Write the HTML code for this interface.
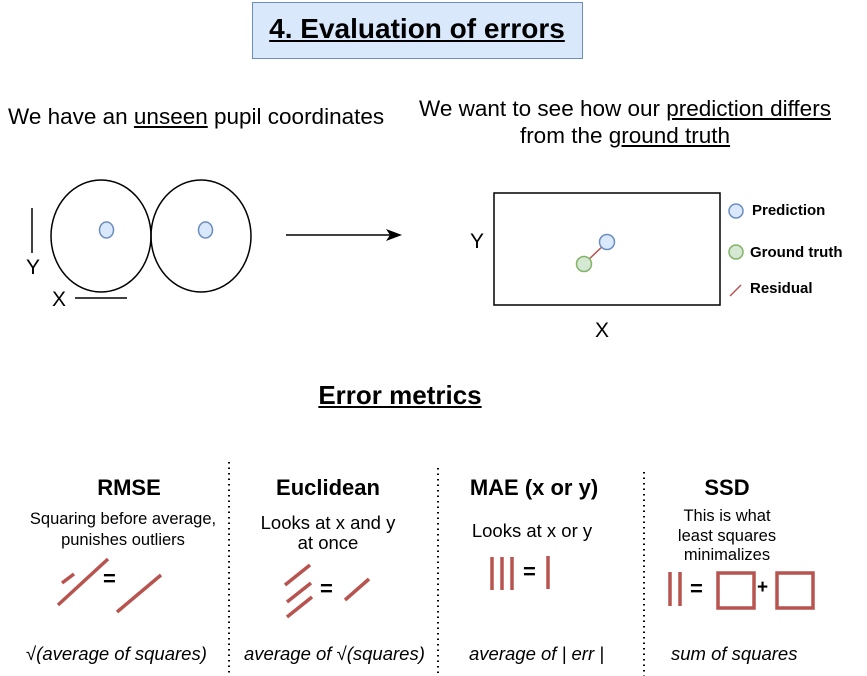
<!DOCTYPE html>
<html><head><style>
body{margin:0;width:867px;height:676px;background:#fff;position:relative;overflow:hidden;font-family:"Liberation Sans",Arial,sans-serif;color:#000}
.a{position:absolute;white-space:nowrap}
.c{transform:translateX(-50%);text-align:center}
u{text-decoration:underline}
</style></head><body>
<div class="a" style="left:252px;top:2px;width:329px;height:55px;background:#dae8fc;border:1px solid #6c8ebf"></div>
<div class="a c" style="left:417px;top:13px;font-size:28px;font-weight:bold"><u>4. Evaluation of errors</u></div>
<div class="a" style="left:8px;top:104px;font-size:22.5px">We have an <u>unseen</u> pupil coordinates</div>
<div class="a c" style="left:625px;top:95px;font-size:22.5px;line-height:27px">We want to see how our <u>prediction differs</u><br>from the <u>ground truth</u></div>
<div class="a" style="left:26px;top:256px;font-size:21px">Y</div>
<div class="a" style="left:52px;top:288px;font-size:21px">X</div>
<div class="a" style="left:470px;top:230px;font-size:21px">Y</div>
<div class="a" style="left:595px;top:319px;font-size:21px">X</div>
<div class="a c" style="left:400px;top:380px;font-size:26px;font-weight:bold"><u>Error metrics</u></div>
<div class="a" style="left:752px;top:202px;font-size:15px;font-weight:bold">Prediction</div>
<div class="a" style="left:750px;top:244px;font-size:15px;font-weight:bold">Ground truth</div>
<div class="a" style="left:750px;top:280px;font-size:15px;font-weight:bold">Residual</div>
<svg class="a" style="left:0;top:0" width="867" height="676">
<line x1="32" y1="208" x2="32" y2="253" stroke="#000" stroke-width="1.5"/>
<line x1="75" y1="298" x2="127" y2="298" stroke="#000" stroke-width="1.5"/>
<ellipse cx="101" cy="236" rx="50" ry="56" fill="none" stroke="#000" stroke-width="1.5"/>
<ellipse cx="201" cy="236" rx="50" ry="56" fill="none" stroke="#000" stroke-width="1.5"/>
<ellipse cx="106.5" cy="230" rx="7" ry="8" fill="#dae8fc" stroke="#6c8ebf" stroke-width="1.5"/>
<ellipse cx="205.5" cy="230" rx="7" ry="8" fill="#dae8fc" stroke="#6c8ebf" stroke-width="1.5"/>
<line x1="286" y1="235" x2="392" y2="235" stroke="#000" stroke-width="1.5"/>
<path d="M386 229 L402 235 L386 241 L390 235Z" fill="#000"/>
<rect x="494" y="193" width="226" height="112" fill="none" stroke="#000" stroke-width="1.5"/>
<line x1="584" y1="264" x2="607" y2="242" stroke="#b85450" stroke-width="1.5"/>
<circle cx="607" cy="242" r="7.5" fill="#dae8fc" stroke="#6c8ebf" stroke-width="1.5"/>
<circle cx="584" cy="264" r="7.5" fill="#d5e8d4" stroke="#82b366" stroke-width="1.5"/>
<circle cx="736" cy="211" r="7" fill="#dae8fc" stroke="#6c8ebf" stroke-width="1.5"/>
<circle cx="736" cy="252" r="7" fill="#d5e8d4" stroke="#82b366" stroke-width="1.5"/>
<line x1="730" y1="296" x2="741" y2="285" stroke="#b85450" stroke-width="1.5"/>
<g stroke="#000" stroke-width="2" stroke-dasharray="1.5 4">
<line x1="229" y1="462" x2="229" y2="676"/><line x1="438" y1="468" x2="438" y2="676"/><line x1="644" y1="472" x2="644" y2="676"/>
</g>
<g stroke="#b85450" stroke-width="3.5" fill="none">
<line x1="62" y1="583" x2="74" y2="574"/><line x1="58" y1="605" x2="108" y2="559"/><line x1="117" y1="612" x2="161" y2="575"/>
<line x1="285" y1="585" x2="310" y2="565"/><line x1="287" y1="602" x2="311" y2="583"/><line x1="287" y1="617" x2="312" y2="597"/><line x1="345" y1="600" x2="369" y2="579"/>
<line x1="492" y1="557" x2="492" y2="590"/><line x1="502" y1="557" x2="502" y2="590"/><line x1="512" y1="557" x2="512" y2="590"/><line x1="548" y1="556" x2="548" y2="589"/>
<line x1="670" y1="572" x2="670" y2="606"/><line x1="680" y1="572" x2="680" y2="606"/>
<rect x="718" y="573" width="36" height="35"/><rect x="777" y="573" width="36" height="35"/>
</g>
</svg>
<div class="a" style="left:103px;top:566px;font-size:22px;font-weight:bold">=</div>
<div class="a" style="left:320px;top:576px;font-size:22px;font-weight:bold">=</div>
<div class="a" style="left:523px;top:559px;font-size:22px;font-weight:bold">=</div>
<div class="a" style="left:690px;top:576px;font-size:22px;font-weight:bold">=</div>
<div class="a" style="left:757px;top:577px;font-size:19px;font-weight:bold">+</div>
<div class="a c" style="left:129px;top:475px;font-size:22px;font-weight:bold">RMSE</div>
<div class="a c" style="left:328px;top:475px;font-size:22px;font-weight:bold">Euclidean</div>
<div class="a c" style="left:534px;top:475px;font-size:22px;font-weight:bold">MAE (x or y)</div>
<div class="a c" style="left:727px;top:475px;font-size:22px;font-weight:bold">SSD</div>
<div class="a c" style="left:123px;top:509px;font-size:16.5px;line-height:21px">Squaring before average,<br>punishes outliers</div>
<div class="a c" style="left:328px;top:513px;font-size:18.5px;line-height:20px">Looks at x and y<br>at once</div>
<div class="a c" style="left:532px;top:520px;font-size:18.5px">Looks at x or y</div>
<div class="a c" style="left:727px;top:507px;font-size:16.5px;line-height:19.5px">This is what<br>least squares<br>minimalizes</div>
<div class="a" style="left:26px;top:643px;font-size:18.5px;font-style:italic">√(average of squares)</div>
<div class="a" style="left:244px;top:643px;font-size:18.5px;font-style:italic">average of √(squares)</div>
<div class="a" style="left:469px;top:643px;font-size:18.5px;font-style:italic">average of | err |</div>
<div class="a" style="left:671px;top:643px;font-size:18.5px;font-style:italic">sum of squares</div>
</body></html>
